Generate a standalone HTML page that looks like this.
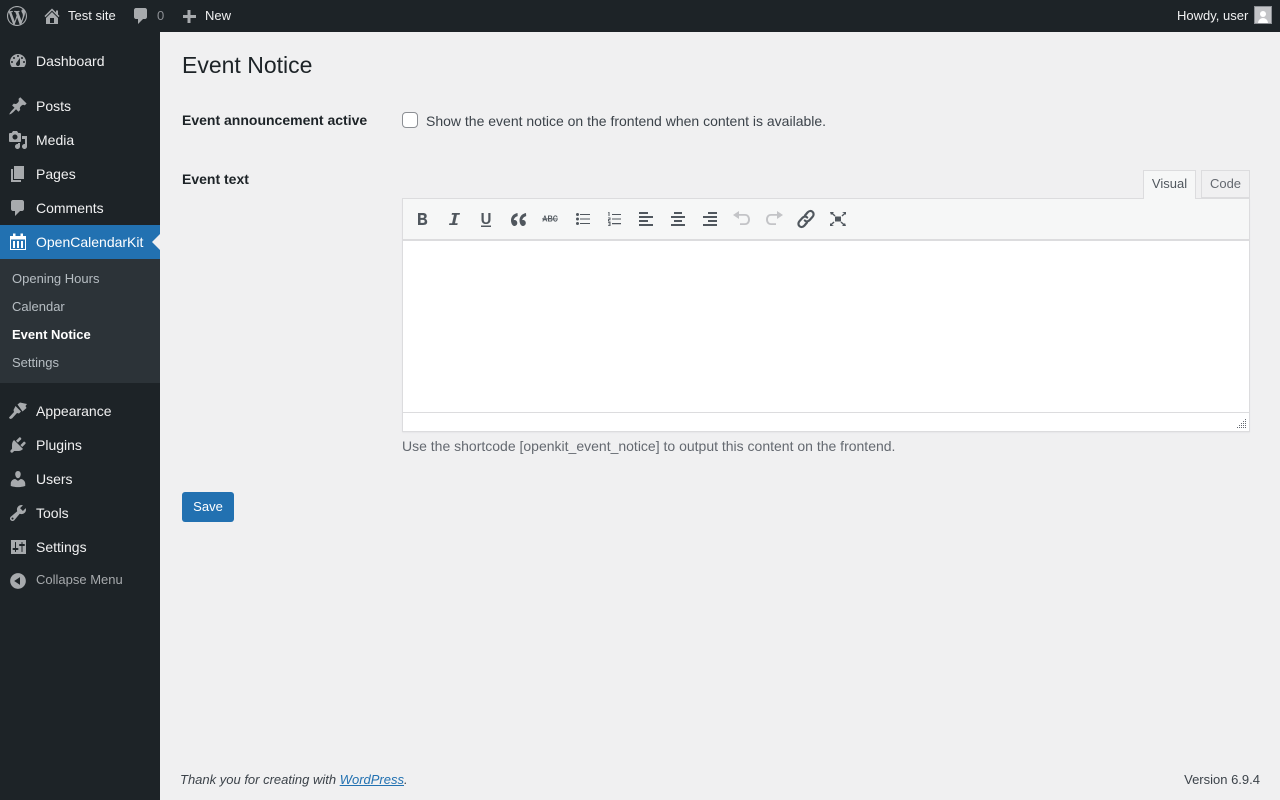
<!DOCTYPE html>
<html lang="en"><head><meta charset="utf-8"><title>Event Notice</title>
<style>
*{box-sizing:border-box}
html,body{margin:0;padding:0;width:1280px;height:800px;overflow:hidden;background:#f0f0f1;font-family:"Liberation Sans",sans-serif;color:#3c434a;font-size:14px}
.a{position:absolute;white-space:nowrap}
#bar{position:absolute;left:0;top:0;width:1280px;height:32px;background:#1d2327}
#side{position:absolute;left:0;top:32px;width:160px;height:768px;background:#1d2327}
.t{position:absolute;line-height:32px;font-size:13px;color:#f0f0f1;white-space:nowrap;top:0}
svg.i{position:absolute;fill:#a7aaad}
.m{position:absolute;left:36px;font-size:14px;line-height:34px;height:34px;color:#f0f0f1;white-space:nowrap}
.s{position:absolute;left:12px;font-size:13px;line-height:28px;color:rgba(240,246,252,.7);white-space:nowrap}
svg.e{position:absolute;top:209px;width:20px;height:20px;fill:#50575e}
</style></head><body>
<div id="bar"></div>
<svg class="i" style="left:7px;top:6px" width="20" height="20" viewBox="0 0 20 20"><path d="M20 10c0-5.51-4.49-10-10-10C4.48 0 0 4.49 0 10c0 5.52 4.48 10 10 10 5.51 0 10-4.48 10-10zM7.78 15.37L4.37 6.22c.55-.02 1.17-.08 1.17-.08.5-.06.44-1.13-.06-1.11 0 0-1.45.11-2.37.11-.18 0-.37 0-.58-.01C4.12 2.69 6.87 1.11 10 1.11c2.33 0 4.45.87 6.05 2.34-.68-.11-1.65.39-1.65 1.58 0 .74.45 1.36.9 2.1.35.61.55 1.36.55 2.46 0 1.49-1.4 5-1.4 5l-3.03-8.37c.54-.02.82-.17.82-.17.5-.05.44-1.25-.06-1.22 0 0-1.44.12-2.38.12-.87 0-2.33-.12-2.33-.12-.5-.03-.56 1.2-.06 1.22l.92.08 1.26 3.41zM17.41 10c.24-.64.74-1.87.43-4.25.7 1.29 1.05 2.71 1.05 4.25 0 3.29-1.73 6.24-4.4 7.78.97-2.59 1.94-5.2 2.92-7.78zM6.1 18.09C3.12 16.65 1.11 13.53 1.11 10c0-1.3.23-2.48.72-3.59C3.25 10.3 4.67 14.2 6.1 18.09zm4.03-6.63l2.58 6.98c-.86.29-1.76.45-2.71.45-.79 0-1.57-.11-2.29-.33.81-2.38 1.62-4.74 2.42-7.1z"/></svg>
<svg class="i" style="left:42px;top:6px" width="20" height="20" viewBox="0 0 20 20"><path d="M16 8.5l1.53 1.53-1.06 1.06L10 4.62l-6.47 6.47-1.06-1.06L10 2.5l4 4v-2h2v4zm-6-2.46l6 5.99V18H4v-5.97zM12 17v-5H8v5h4z"/></svg>
<div class="t" style="left:68px">Test site</div>
<svg class="i" style="left:131px;top:6px" width="20" height="20" viewBox="0 0 20 20"><path d="M5 2h9c1.1 0 2 .9 2 2v7c0 1.1-.9 2-2 2h-2l-5 5v-5H5c-1.1 0-2-.9-2-2V4c0-1.1.9-2 2-2z"/></svg>
<div class="t" style="left:157px;color:#8c8f94">0</div>
<svg class="i" style="left:179px;top:6px" width="20" height="20" viewBox="0 0 20 20"><path d="M17 9v3h-5.500v5h-3V12H4V9h4.500V4h3v5z"/></svg>
<div class="t" style="left:205px">New</div>
<div class="t" style="left:1177px">Howdy, user</div>
<div class="a" style="left:1254px;top:6px;width:18px;height:18px;background:#c3c4c7;border:1px solid #8c8f94;overflow:hidden"><div style="position:absolute;left:5px;top:4px;width:6px;height:6px;border-radius:50%;background:#fff"></div><div style="position:absolute;left:3px;top:11px;width:10px;height:5px;border-radius:5px 5px 0 0;background:#fff"></div></div>

<div id="side"></div>
<svg class="i" style="left:8px;top:51px" width="20" height="20" viewBox="0 0 20 20"><path fill-rule="evenodd" d="M3.76 16h12.48c1.1-1.37 1.76-3.11 1.76-5 0-4.42-3.58-8-8-8s-8 3.58-8 8c0 1.89.66 3.63 1.76 5zM10 4c.55 0 1 .45 1 1s-.45 1-1 1-1-.45-1-1 .45-1 1-1zM6 6c.55 0 1 .45 1 1s-.45 1-1 1-1-.45-1-1 .45-1 1-1zm8 0c.55 0 1 .45 1 1s-.45 1-1 1-1-.45-1-1 .45-1 1-1zm-5.37 5.55L12 7v6c0 1.100-.9 2-2 2s-2-.9-2-2c0-.57.24-1.080.63-1.450zM4 10c.55 0 1 .45 1 1s-.45 1-1 1-1-.45-1-1 .45-1 1-1zm12 0c.55 0 1 .45 1 1s-.45 1-1 1-1-.45-1-1 .45-1 1-1z"/></svg>
<div class="m" style="top:44px">Dashboard</div>
<svg class="i" style="left:8px;top:96px" width="20" height="20" viewBox="0 0 20 20"><path d="M10.44 3.02l1.82-1.82 6.36 6.35-1.83 1.820c-1.050-.68-2.480-.57-3.410.36l-.75.75c-.92.93-1.040 2.350-.35 3.410l-1.830 1.820-2.410-2.410-2.800 2.790c-.42.42-3.380 2.710-3.800 2.290s1.860-3.390 2.280-3.810l2.790-2.790L4.100 9.360l1.830-1.820c1.050.69 2.480.57 3.400-.36l.75-.75c.93-.92 1.050-2.350.36-3.410z"/></svg>
<div class="m" style="top:89px">Posts</div>
<svg class="i" style="left:8px;top:130px" width="20" height="20" viewBox="0 0 20 20"><path fill-rule="evenodd" d="M13 11V4c0-.55-.45-1-1-1h-1.670L9 1H5L3.670 3H2c-.55 0-1 .45-1 1v7c0 .55.45 1 1 1h10c.55 0 1-.45 1-1zM7 4.500c1.380 0 2.500 1.120 2.500 2.500S8.380 9.500 7 9.500 4.500 8.380 4.500 7 5.620 4.500 7 4.500zM14 6h5v10.500c0 1.380-1.120 2.500-2.500 2.500S14 17.880 14 16.500s1.120-2.500 2.500-2.500c.17 0 .34.020.5.050V9h-3V6zm-4 8.050V13h2v3.500c0 1.380-1.120 2.500-2.500 2.500S7 17.880 7 16.500 8.120 14 9.500 14c.17 0 .34.020.5.050z"/></svg>
<div class="m" style="top:123px">Media</div>
<svg class="i" style="left:8px;top:164px" width="20" height="20" viewBox="0 0 20 20"><path d="M6 15V2h10v13H6zm-1 1h8v2H3V5h2v11z"/></svg>
<div class="m" style="top:157px">Pages</div>
<svg class="i" style="left:8px;top:198px" width="20" height="20" viewBox="0 0 20 20"><path d="M5 2h9c1.100 0 2 .9 2 2v7c0 1.100-.9 2-2 2h-2l-5 5v-5H5c-1.100 0-2-.9-2-2V4c0-1.100.9-2 2-2z"/></svg>
<div class="m" style="top:191px">Comments</div>
<div class="a" style="left:0;top:225px;width:160px;height:34px;background:#2271b1"></div>
<svg class="a" style="left:9px;top:233px" width="18" height="18" viewBox="0 0 18 18"><path fill="#fff" fill-rule="evenodd" d="M1 3h3V.5h2.500V3h5V.5H14V3h3v14H1zM2 6.500V16h14V6.500zM4 8h2v7H4zM8 8h2v7H8zM12 8h2v7h-2z"/></svg>
<div class="m" style="top:225px;color:#fff">OpenCalendarKit</div>
<div class="a" style="left:152px;top:234px;width:0;height:0;border:8px solid transparent;border-left:0;border-right-color:#f0f0f1"></div>
<div class="a" style="left:0;top:259px;width:160px;height:124px;background:#2c3338"></div>
<div class="s" style="top:265px">Opening Hours</div>
<div class="s" style="top:293px">Calendar</div>
<div class="s" style="top:321px;color:#fff;font-weight:700">Event Notice</div>
<div class="s" style="top:349px">Settings</div>
<svg class="i" style="left:8px;top:401px" width="20" height="20" viewBox="0 0 20 20"><path d="M9.500 3.500L12 1.500l7 1.500-1.500 2 1 2-4 3.500zM7.500 5l5.500 5.500-2 2-2-.5-5 5.500-2 .5-1-1.500L6 11l-.5-2z"/></svg>
<div class="m" style="top:394px">Appearance</div>
<svg class="i" style="left:8px;top:435px" width="20" height="20" viewBox="0 0 20 20"><path d="M13.110 4.360L9.870 7.600 8 5.730l3.240-3.240c.35-.34 1.050-.2 1.560.32.52.51.66 1.210.31 1.550zm-8 1.770l.91-1.120 9.010 9.010-1.190.84c-.71.71-2.630 1.160-3.820 1.160H6.140L4.900 17.260c-.59.59-1.540.59-2.120 0-.59-.58-.59-1.530 0-2.120l1.240-1.240v-3.880c0-1.130.4-3.190 1.090-3.890zm7.260 3.970l3.240-3.240c.34-.35 1.040-.21 1.550.31.52.51.66 1.210.31 1.550l-3.240 3.250z"/></svg>
<div class="m" style="top:428px">Plugins</div>
<svg class="i" style="left:8px;top:469px" width="20" height="20" viewBox="0 0 20 20"><path d="M10 9.250c-2.270 0-2.730-3.440-2.730-3.440C7 4.020 7.820 2 9.970 2c2.160 0 2.980 2.020 2.710 3.810 0 0-.41 3.440-2.680 3.440zm0 2.570L12.720 10c2.390 0 4.520 2.330 4.520 4.530v2.490s-3.650 1.130-7.240 1.130c-3.650 0-7.240-1.130-7.240-1.130v-2.490c0-2.250 1.940-4.480 4.470-4.480z"/></svg>
<div class="m" style="top:462px">Users</div>
<svg class="i" style="left:8px;top:503px" width="20" height="20" viewBox="0 0 20 20"><path fill-rule="evenodd" d="M16.680 9.770c-1.340 1.340-3.300 1.670-4.950.99l-5.410 6.520c-.99.99-2.590.99-3.580 0s-.99-2.590 0-3.570l6.520-5.420c-.68-1.650-.35-3.610.99-4.950 1.280-1.280 3.120-1.620 4.720-1.060l-2.890 2.890 2.820 2.820 2.860-2.870c.53 1.580.18 3.390-1.080 4.650zM3.810 16.210c.4.39 1.040.39 1.430 0 .4-.4.4-1.040 0-1.430-.39-.4-1.030-.4-1.430 0-.39.39-.39 1.030 0 1.430z"/></svg>
<div class="m" style="top:496px">Tools</div>
<svg class="i" style="left:8px;top:537px" width="20" height="20" viewBox="0 0 20 20"><path fill-rule="evenodd" d="M18 17V3H3v14zM8 11h1.500c.55 0 1 .45 1 1s-.45 1-1 1H8v1.500c0 .28-.22.5-.5.5s-.5-.22-.5-.5V13H5.500c-.55 0-1-.45-1-1s.45-1 1-1H7V5.500c0-.28.22-.5.5-.5s.5.22.5.5V11zm5.500-2H12c-.55 0-1-.45-1-1s.45-1 1-1h1.500V5.500c0-.28.22-.5.5-.5s.5.22.5.5V7H16c.55 0 1 .45 1 1s-.45 1-1 1h-1.500v5.500c0 .28-.22.5-.5.5s-.5-.22-.5-.5V9z"/></svg>
<div class="m" style="top:530px">Settings</div>
<svg class="i" style="left:8px;top:571px" width="20" height="20" viewBox="0 0 20 20"><path fill-rule="evenodd" d="M10 2.160c4.330 0 7.840 3.510 7.840 7.840s-3.510 7.840-7.840 7.840S2.160 14.330 2.160 10 5.710 2.160 10 2.160zm2 11.720V6.120L6.180 9.970z"/></svg>
<div class="a" style="left:36px;top:571px;font-size:13px;line-height:18px;color:#a7aaad">Collapse Menu</div>

<div class="a" style="left:182px;top:49px;font-size:23px;line-height:32px;color:#1d2327">Event Notice</div>
<div class="a" style="left:182px;top:111px;font-weight:700;line-height:18px;color:#1d2327">Event announcement active</div>
<div class="a" style="left:402px;top:112px;width:16px;height:16px;background:#fff;border:1px solid #8c8f94;border-radius:4px"></div>
<div class="a" style="left:426px;top:112px;line-height:18px;color:#3c434a">Show the event notice on the frontend when content is available.</div>
<div class="a" style="left:182px;top:170px;font-weight:700;line-height:18px;color:#1d2327">Event text</div>

<div class="a" style="left:1143px;top:170px;width:53px;height:29px;background:#f6f7f7;border:1px solid #dcdcde;border-bottom:0;font-size:13px;line-height:26px;text-align:center;color:#50575e;z-index:2">Visual</div>
<div class="a" style="left:1201px;top:170px;width:49px;height:28px;background:#f0f0f1;border:1px solid #dcdcde;font-size:13px;line-height:26px;text-align:center;color:#646970">Code</div>
<div class="a" style="left:402px;top:198px;width:848px;height:234px;background:#fff;border:1px solid #dcdcde;box-shadow:0 1px 1px rgba(0,0,0,.04)"></div>
<div class="a" style="left:403px;top:199px;width:846px;height:42px;background:#f6f7f7;border-bottom:2px solid #dcdcde"></div>
<div class="a" style="left:403px;top:412px;width:846px;height:1px;background:#dcdcde"></div>
<svg class="a" style="left:1236px;top:419px" width="11" height="11" viewBox="0 0 11 11" fill="#646970"><path d="M9 0h1v1H9zM7 2h1v1H7zM9 2h1v1H9zM5 4h1v1H5zM7 4h1v1H7zM9 4h1v1H9zM3 6h1v1H3zM5 6h1v1H5zM7 6h1v1H7zM9 6h1v1H9zM1 8h1v1H1zM3 8h1v1H3zM5 8h1v1H5zM7 8h1v1H7zM9 8h1v1H9z"/></svg>

<svg class="e" style="left:412px" viewBox="0 0 20 20"><path fill-rule="evenodd" d="M6 4h5c2.400 0 3.700 1.100 3.700 3.100 0 1.300-.7 2.200-1.800 2.700 1.500.4 2.300 1.500 2.300 3 0 2.400-1.600 3.200-4.100 3.200H6zm2.500 2.100v2.800h2.100c1.100 0 1.600-.5 1.600-1.400s-.5-1.400-1.600-1.400zm0 4.800v3h2.500c1.200 0 1.700-.5 1.700-1.500s-.6-1.500-1.800-1.500z"/></svg>
<svg class="e" style="left:444px" viewBox="0 0 20 20"><path d="M8 4h8l-.4 1.800h-2.700l-1.900 8.400h2.700L13.300 16H5l.4-1.800h2.700l1.900-8.400H7.600z"/></svg>
<svg class="e" style="left:476px" viewBox="0 0 20 20"><path d="M5.500 4h2.200v6.500c0 1.900.8 2.900 2.300 2.900s2.300-1 2.300-2.900V4h2.200v6.600c0 2.800-1.600 4.400-4.500 4.400s-4.500-1.600-4.500-4.400zM5 16.500h10V18H5z"/></svg>
<svg class="e" style="left:508px" viewBox="0 0 20 20"><path d="M9.500 4C5.500 4.800 3 7.500 3 11.500 3 14 4.400 17 6.300 17c1.700 0 3-1.300 3-3s-1.200-3-2.800-3c-.3 0-.6 0-.8.100.3-1.800 1.900-3.400 4-4zM18 4c-4 .8-6.500 3.500-6.500 7.500 0 2.500 1.400 5.500 3.300 5.500 1.700 0 3-1.300 3-3s-1.200-3-2.800-3c-.3 0-.6 0-.8.100.3-1.800 1.900-3.400 4-4z"/></svg>
<svg class="e" style="left:540px" viewBox="0 0 20 20"><path d="M2 9.500h16v.8H2z"/><path d="M4.400 6.500h1l2 6H6.400l-.4-1.300H3.800L3.400 12.500H2.400zm.5 1.300l-.8 2.500H5.700zM8 6.500h2.500c1.100 0 1.700.5 1.700 1.500 0 .6-.3 1-.7 1.300.6.200 1 .7 1 1.400 0 1.200-.8 1.800-2 1.800H8zm1 .9v1.600h1.300c.6 0 .9-.3.9-.8s-.3-.8-.9-.8zm0 2.400v1.800h1.500c.7 0 1-.4 1-.9s-.3-.9-1-.9zM17.600 10.500c-.3 1.300-1.100 2.100-2.200 2.100-1.400 0-2.300-1.200-2.300-3.100s.9-3.100 2.300-3.100c1.100 0 1.900.7 2.200 2h-1c-.2-.7-.6-1.100-1.200-1.100-.8 0-1.300.8-1.300 2.200s.5 2.200 1.300 2.200c.6 0 1-.4 1.200-1.200z"/></svg>
<svg class="e" style="left:572px" viewBox="0 0 20 20"><circle cx="5.500" cy="5.500" r="1.500"/><circle cx="5.500" cy="10" r="1.500"/><circle cx="5.500" cy="14.500" r="1.500"/><path d="M8 5h10v1H8zM8 9.500h10v1H8zM8 14h10v1H8z"/></svg>
<svg class="e" style="left:604px" viewBox="0 0 20 20"><path d="M8 5h9v1H8zM8 9.500h9v1H8zM8 14h9v1.200H8zM4.500 3h1v4h-1V4H4zM4 8.500h2.500v2.400H5v.8h1.500v.8H4v-2.400h1.500v-.8H4zM4 13h2.500v4H4v-.8h1.500v-.8H4.500v-.7h1v-.9H4z"/></svg>
<svg class="e" style="left:636px" viewBox="0 0 20 20"><path d="M3 3h9v2H3zM3 7h14v2H3zM3 11h9v2H3zM3 15h14v2H3z"/></svg>
<svg class="e" style="left:668px" viewBox="0 0 20 20"><path d="M6 3h8v2H6zM3 7h14v2H3zM6 11h8v2H6zM3 15h14v2H3z"/></svg>
<svg class="e" style="left:700px" viewBox="0 0 20 20"><path d="M8 3h9v2H8zM3 7h14v2H3zM8 11h9v2H8zM3 15h14v2H3z"/></svg>
<svg class="e" style="left:732px;fill:#c3c4c7" viewBox="0 0 20 20"><path d="M7 2v3h6c3 0 5 2.300 5 5.500s-2 5.500-5 5.500H8v-1.800h5c1.900 0 3-1.500 3-3.700S14.900 6.800 13 6.800H7V10L1 6z"/></svg>
<svg class="e" style="left:764px;fill:#c3c4c7" viewBox="0 0 20 20"><path d="M13 2v3H7C4 5 2 7.300 2 10.500S4 16 7 16h5v-1.800H7c-1.900 0-3-1.500-3-3.700S5.100 6.800 7 6.800h6V10l6-4z"/></svg>
<svg class="e" style="left:796px" viewBox="0 0 20 20"><g fill="none" stroke="#50575e" stroke-width="2.200" stroke-linecap="round"><path d="M9 6.500l2.500-3c1.500-1.700 3.600-1.900 5-.7s1.500 3.500 0 5.100l-3 3.300c-1.500 1.500-3.400 1.500-4.700.3"/><path d="M11 13.500l-2.500 3c-1.500 1.700-3.600 1.900-5 .7s-1.500-3.500 0-5.100l3-3.300c1.500-1.500 3.400-1.500 4.700-.3"/></g></svg>
<svg class="e" style="left:828px" viewBox="0 0 20 20"><path d="M7 7.500h6v5H7zM2 3h4L4.900 4.100l2.600 2.400-.9 1-2.700-2.400L3 6zM18 3v3l-.9-.9-2.700 2.400-.9-1 2.600-2.400L14 3zM2 17v-3l.9.9 2.700-2.400.9 1-2.600 2.400L6 17zM18 17h-4l1.100-1.100-2.600-2.400.9-1 2.700 2.400.9-.9z"/></svg>

<div class="a" style="left:402px;top:437px;line-height:18px;color:#646970">Use the shortcode [openkit_event_notice] to output this content on the frontend.</div>
<div class="a" style="left:182px;top:492px;width:52px;height:30px;background:#2271b1;border-radius:3px;color:#fff;font-size:13px;line-height:30px;text-align:center">Save</div>
<div class="a" style="left:180px;top:771px;font-size:13px;line-height:18px;font-style:italic;color:#3c434a">Thank you for creating with <span style="color:#2271b1;text-decoration:underline">WordPress</span>.</div>
<div class="a" style="right:20px;top:771px;font-size:13px;line-height:18px;color:#3c434a">Version 6.9.4</div>
</body></html>
